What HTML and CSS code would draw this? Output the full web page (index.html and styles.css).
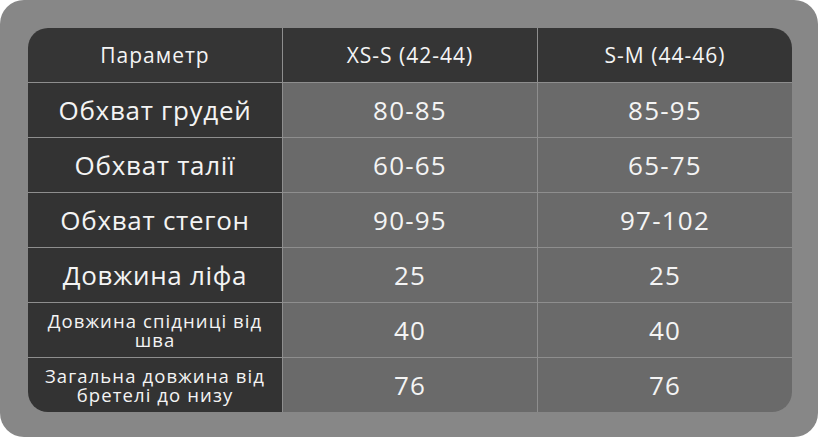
FILE: index.html
```html
<!DOCTYPE html>
<html lang="uk">
<head>
<meta charset="utf-8">
<link rel="stylesheet" href="styles.css">
</head>
<body>
<div class="frame">
  <div class="table">
    <div class="cell head">Параметр</div>
    <div class="cell head">XS-S (42-44)</div>
    <div class="cell head">S-M (44-46)</div>

    <div class="cell label">Обхват грудей</div>
    <div class="cell val">80-85</div>
    <div class="cell val">85-95</div>

    <div class="cell label">Обхват талії</div>
    <div class="cell val">60-65</div>
    <div class="cell val">65-75</div>

    <div class="cell label">Обхват стегон</div>
    <div class="cell val">90-95</div>
    <div class="cell val">97-102</div>

    <div class="cell label">Довжина ліфа</div>
    <div class="cell val">25</div>
    <div class="cell val">25</div>

    <div class="cell label small">Довжина спідниці від шва</div>
    <div class="cell val">40</div>
    <div class="cell val">40</div>

    <div class="cell label small">Загальна довжина від бретелі до низу</div>
    <div class="cell val">76</div>
    <div class="cell val">76</div>
  </div>
</div>
</body>
</html>
```
FILE: styles.css
```css
html, body {
  margin: 0;
  padding: 0;
  background: #ffffff;
}
.frame {
  width: 818px;
  height: 437px;
  box-sizing: border-box;
  padding: 28px 26px 25px 28px;
  background: #878787;
  border-radius: 24px;
}
.table {
  display: grid;
  grid-template-columns: 254px 254px 254px;
  grid-template-rows: repeat(7, 54px);
  gap: 1px;
  width: 764px;
  height: 384px;
  background: #8e8e8e;
  border-radius: 20px;
  overflow: hidden;
  font-family: "Open Sans", "Noto Sans", sans-serif;
  color: #f4f4f4;
}
.cell {
  display: flex;
  align-items: center;
  justify-content: center;
  text-align: center;
}
.head {
  background: #353535;
  font-size: 21px;
  font-weight: 500;
  letter-spacing: 1px;
}
.label {
  background: #333333;
  font-size: 26px;
  letter-spacing: 0.7px;
}
.label.small {
  font-size: 18.5px;
  line-height: 19px;
  padding: 0 12px;
  letter-spacing: 1.1px;
}
.val {
  background: #6a6a6a;
  font-size: 26px;
  letter-spacing: 1.2px;
}
```
